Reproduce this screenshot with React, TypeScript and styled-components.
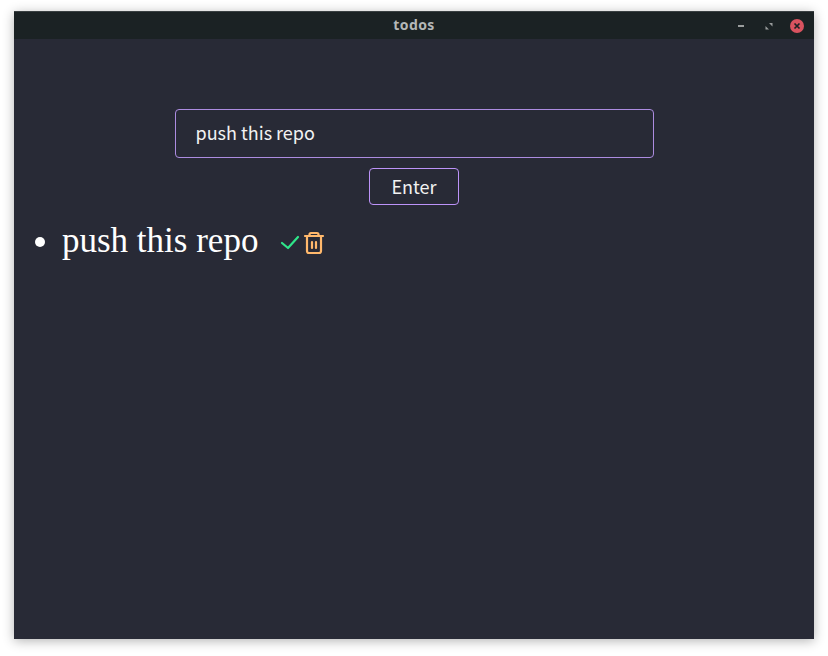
import { createGlobalStyle, styled } from 'styled-components';

const GlobalStyle = createGlobalStyle`
	html, body {
		margin: 0;
		background: #fff;
	}
`;

const Screen = styled.div`
	box-sizing: border-box;
	width: 828px;
	height: 656px;
	padding: 11px 14px 17px;
	overflow: hidden;
`;

const Window = styled.div`
	display: flex;
	flex-direction: column;
	height: 628px;
	background: #282a36;
	box-shadow: 0 2px 12px rgba(0, 0, 0, 0.3);
	border-radius: 2px 2px 0 0;
`;

const TitleBar = styled.header`
	position: relative;
	flex: none;
	display: flex;
	align-items: center;
	justify-content: center;
	height: 28px;
	padding-bottom: 2px;
	background: #1b2224;
	border-top: 1px solid #3a4042;
	box-sizing: border-box;
`;

const Title = styled.span`
	font: 700 14px 'Noto Sans', sans-serif;
	letter-spacing: 0.4px;
	color: #b5b8b8;
`;

const WindowControls = styled.div`
	position: absolute;
	right: 10px;
	top: 0;
	bottom: 0;
	display: flex;
	align-items: center;
	gap: 14px;
`;

const ControlIcon = styled.svg`
	display: block;
	width: 14px;
	height: 14px;
`;

const Main = styled.main`
	flex: 1;
	display: flex;
	flex-direction: column;
	padding-top: 70px;
`;

const Form = styled.form`
	display: flex;
	flex-direction: column;
	align-items: center;
	gap: 10px;
`;

const TodoInput = styled.input`
	box-sizing: border-box;
	width: 479px;
	height: 49px;
	padding: 0 20px 4px;
	background: transparent;
	border: 1px solid #ac8ce0;
	border-radius: 4px;
	outline: none;
	color: #f2f2f2;
	font: 400 18px 'Noto Sans CJK KR', 'Noto Sans', sans-serif;
`;

const EnterButton = styled.button`
	box-sizing: border-box;
	width: 90px;
	height: 37px;
	padding: 0 0 2px;
	background: transparent;
	border: 1px solid #bd93f9;
	border-radius: 4px;
	color: #f2f2f2;
	font: 400 18px 'Noto Sans CJK KR', 'Noto Sans', sans-serif;
`;

const TodoList = styled.ul`
	margin: 11px 0 0;
	padding: 0 0 0 48px;
	color: #fff;
	font: 400 35px 'Liberation Serif', serif;
`;

const TodoItem = styled.li`
	line-height: 50px;
`;

const TodoRow = styled.div`
	display: flex;
	align-items: center;
`;

const TodoText = styled.span`
	margin-right: 20px;
`;

const ActionIcon = styled.svg`
	display: block;
	width: 24px;
	height: 24px;
	margin-top: 4px;
	fill: none;
	stroke: ${props => props.color};
	stroke-width: 2.2;
	stroke-linecap: round;
	stroke-linejoin: round;
`;

function App() {
	return (
		<Screen>
			<GlobalStyle />
			<Window>
				<TitleBar>
					<Title>todos</Title>
					<WindowControls>
						<ControlIcon viewBox='0 0 14 14'>
							<rect x='4' y='6' width='6' height='2' fill='#9a9d9d' />
						</ControlIcon>
						<ControlIcon viewBox='0 0 14 14'>
							<path d='M7 4h3.5v3.5zM7 10.5H3.5V7z' fill='#9a9d9d' />
						</ControlIcon>
						<ControlIcon viewBox='0 0 14 14'>
							<circle cx='7' cy='7' r='7' fill='#d9535f' />
							<path d='M4.5 4.5l5 5M9.5 4.5l-5 5' stroke='#1b2224' strokeWidth='1.7' />
						</ControlIcon>
					</WindowControls>
				</TitleBar>
				<Main>
					<Form>
						<TodoInput defaultValue='push this repo' />
						<EnterButton type='button'>Enter</EnterButton>
					</Form>
					<TodoList>
						<TodoItem>
							<TodoRow>
								<TodoText>push this repo</TodoText>
								<ActionIcon viewBox='0 0 24 24' color='#2fe58a'>
									<path d='M4 12l6 5L20 6' />
								</ActionIcon>
								<ActionIcon viewBox='0 0 24 24' color='#ffb86c'>
									<path d='M3 5h18M7.5 5V3.5A1.5 1.5 0 0 1 9 2h6a1.5 1.5 0 0 1 1.5 1.5V5M5 5v15a2 2 0 0 0 2 2h10a2 2 0 0 0 2-2V5M10 11v6M14 11v6' />
								</ActionIcon>
							</TodoRow>
						</TodoItem>
					</TodoList>
				</Main>
			</Window>
		</Screen>
	);
}

export default App;
